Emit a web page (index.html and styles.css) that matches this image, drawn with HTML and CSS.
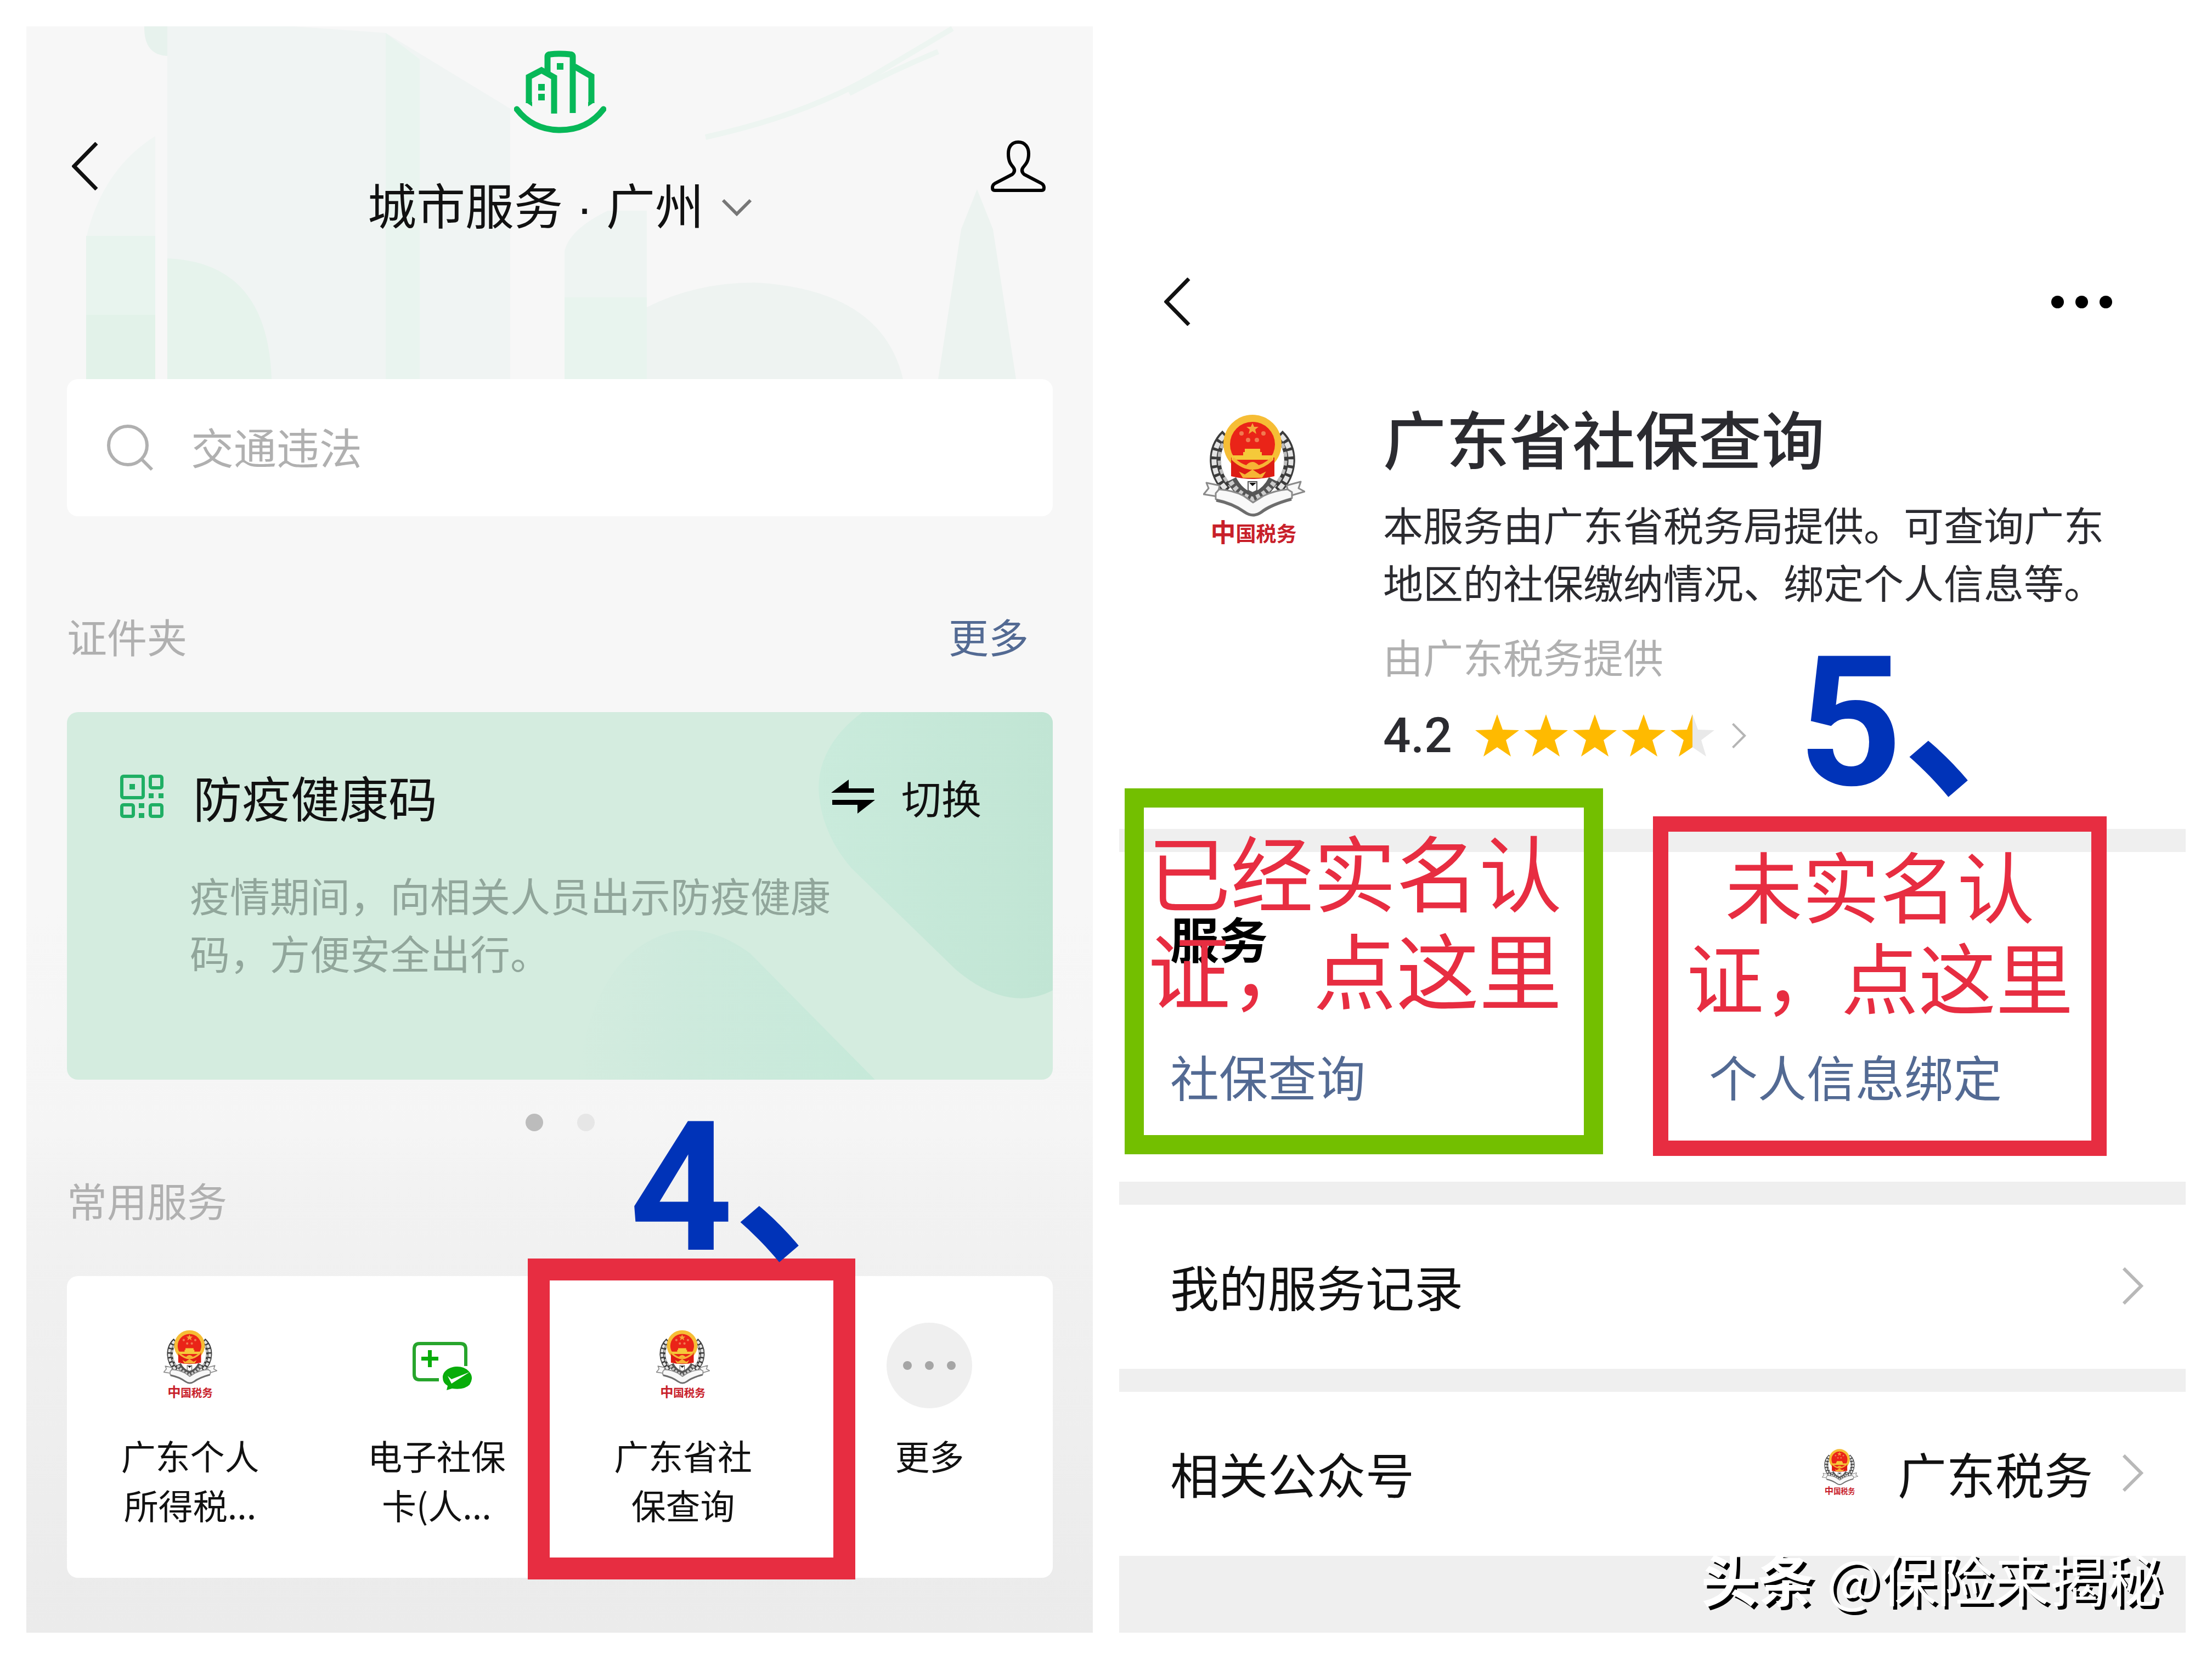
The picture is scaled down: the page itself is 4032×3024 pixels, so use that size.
FILE: index.html
```html
<!DOCTYPE html>
<html lang="zh-CN">
<head>
    <meta charset="UTF-8">
    <meta name="viewport" content="width=device-width, initial-scale=1.0">
    <title>城市服务 · 广州</title>
    <link rel="stylesheet" href="styles.css">
</head>
<body>
    <!-- Shared icons -->
    <svg class="sprite" aria-hidden="true">
        <symbol id="emblem" viewBox="0 0 186 244">
            <g fill="none">
                <path d="M42 36C14 62 16 108 46 136M138 36C166 62 164 108 134 136" stroke="#3c3c3c" stroke-width="20"/>
                <path d="M38 38C12 64 14 108 44 138M142 38C168 64 166 108 136 138" stroke="#e4e4e4" stroke-width="9" stroke-dasharray="11 5"/>
                <path d="M46 40C22 64 24 104 52 132M134 40C158 64 156 104 128 132" stroke="#bdbdbd" stroke-width="6" stroke-dasharray="9 7"/>
                <path d="M52 118C60 134 72 146 90 152C108 146 120 134 128 118" stroke="#555" stroke-width="18"/>
                <path d="M50 122C60 138 74 148 90 154C106 148 120 138 130 122" stroke="#ccc" stroke-width="9" stroke-dasharray="7 5"/>
            </g>
            <circle cx="90" cy="53" r="53" fill="#f6bd35"/>
            <path d="M51 78H130V112Q90 122 51 112Z" fill="#dd1c14"/>
            <circle cx="90" cy="54" r="41" fill="#ea2418"/>
            <path d="M90 15l3 7h8l-6 5 2 8-7-5-7 5 2-8-6-5h8z" fill="#f4a83c"/>
            <g fill="#f07a50">
                <circle cx="70" cy="34" r="4"/>
                <circle cx="110" cy="34" r="4"/>
                <circle cx="82" cy="46" r="4"/>
                <circle cx="98" cy="46" r="4"/>
            </g>
            <path d="M76 62H104V68H107V74H128V82H52V74H73V68H76Z" fill="#f5c93a"/>
            <path d="M54 80Q90 114 126 80" fill="none" stroke="#f6b435" stroke-width="6"/>
            <path d="M78 94Q90 80 102 94M68 106l8 4 14-9 14 9 8-4-5 8H73z" fill="#f6b435" stroke="#f6b435" stroke-width="2"/>
            <path d="M82 122H98V138L90 142L82 138Z" fill="#fff" stroke="#555" stroke-width="2"/>
            <path d="M84 124H97L90 130Z" fill="#111"/>
            <g fill="#f8f8f8" stroke="#8a8a8a" stroke-width="3" stroke-linejoin="round">
                <path d="M30 129L6 124L10 134L1 145L26 149Z"/>
                <path d="M152 129L178 122L174 134L185 140L158 148Z"/>
                <path d="M29 136Q56 138 74 148L91 160L110 148Q130 138 154 136L162 141V152Q120 164 106 176Q91 188 76 176Q54 160 23 154V143Z"/>
            </g>
            <path d="M24 156Q54 162 76 178Q91 188 106 178Q124 164 161 154" fill="none" stroke="#6d6d6d" stroke-width="5"/>
            <text class="emblem-text" x="92" y="231" text-anchor="middle"><tspan class="emblem-first">中</tspan>国税务</text>
        </symbol>
        <symbol id="back" viewBox="0 0 48 88">
            <path d="M45 2L4 44L45 86" fill="none" stroke="currentColor" stroke-width="7"/>
        </symbol>
        <symbol id="next" viewBox="0 0 38 68">
            <path d="M2 2L34 34L2 66" fill="none" stroke="currentColor" stroke-width="6"/>
        </symbol>
        <symbol id="star" viewBox="0 0 80 78">
            <path d="M40 0L50 28L80 29L56 47L65 77L40 60L15 77L24 47L0 29L30 28Z"/>
        </symbol>
    </svg>

    <main class="screens">
        <section class="screen city">
            <svg class="skyline" viewBox="0 0 1944 643" preserveAspectRatio="none" aria-hidden="true">
                <path d="M215 0H306Q306 54 260 54T215 0Z" fill="#e7f2ed"/>
                <path d="M257 0H486L655 12L882 150V643H257Z" fill="#f0f4f3"/>
                <path d="M655 12L717 60V643H655Z" fill="#e9f4ef"/>
                <path d="M235 200Q140 260 110 382H235Z" fill="#f0f5f3"/>
                <path d="M109 382H235V643H109Z" fill="#e8f4ee"/>
                <path d="M109 526H235V643H109Z" fill="#e2f2e9"/>
                <path d="M257 423Q440 430 447 643H257Z" fill="#e6f3ec"/>
                <path d="M981 643V410Q990 370 1060 336H1131V643Z" fill="#eef4f2"/>
                <path d="M981 494H1131V643H981Z" fill="#e8f4ee"/>
                <path d="M1131 512Q1220 467 1328 467Q1560 480 1598 643H1131Z" fill="#eef3f1"/>
                <path d="M1662 643L1704 370L1733 297L1762 370L1804 643Z" fill="#ecf3f0"/>
                <path d="M1688 4L1560 80Q1430 160 1238 202M1662 46Q1580 80 1500 122" fill="none" stroke="#edf5f1" stroke-width="10"/>
            </svg>

            <header class="city-header">
                <button class="icon-btn" type="button" aria-label="返回">
                    <svg class="back-icon"><use href="#back"/></svg>
                </button>
                <div class="city-name">
                    <svg class="city-logo" viewBox="0 0 168 152" fill="none" stroke="#07b858" aria-hidden="true">
                        <path d="M27 96V48L50 36L73 49V115" stroke-width="11"/>
                        <path d="M61 42V11Q61 7 66 7Q84 5 102 7Q107 7 107 11V114" stroke-width="11"/>
                        <path d="M110 29L141 47V96" stroke-width="11"/>
                        <path d="M21 94H33V102ZM147 94H135V102Z" fill="#07b858" stroke="none"/>
                        <path d="M5 107Q34 145 84 145T163 107" stroke-width="11" stroke-linecap="round"/>
                        <path d="M78 23H90V35H78ZM44 61H56V73H44ZM44 79H56V91H44Z" fill="#07b858" stroke="none"/>
                    </svg>
                    <button class="city-select" type="button">
                        城市服务 · 广州
                        <svg class="down-icon" viewBox="0 0 56 32"><path d="M3 3L28 28L53 3" fill="none" stroke="#777" stroke-width="6"/></svg>
                    </button>
                </div>
                <button class="icon-btn user" type="button" aria-label="我的">
                    <svg class="user-icon" viewBox="0 0 100 94"><path d="M50 3C37 3 32 13 32 24C32 38 36 43 41 49Q46 56 39 62L8 78Q3 81 3 86Q3 91 7 91H93Q97 91 97 86Q97 81 92 78L61 62Q54 56 59 49C64 43 69 38 69 24C69 13 63 3 50 3Z" fill="none" stroke="#000" stroke-width="6"/></svg>
                </button>
            </header>

            <label class="search">
                <svg class="search-icon" viewBox="0 0 86 86" aria-hidden="true"><path d="M39 4a35 35 0 1 0 0 70a35 35 0 1 0 0-70M64 64L83 83" fill="none" stroke="#b0b0b0" stroke-width="6"/></svg>
                <input class="search-input" type="text" placeholder="交通违法" aria-label="搜索">
            </label>

            <div class="section-head">
                <h2>证件夹</h2>
                <a href="#">更多</a>
            </div>
            <article class="pass-card">
                <svg class="pass-art" viewBox="0 0 1797 671" preserveAspectRatio="none" aria-hidden="true">
                    <defs>
                        <linearGradient id="hill" x1="0" x2="1">
                            <stop offset="0" stop-color="#d4ecdf"/>
                            <stop offset="0.3" stop-color="#ceeadd"/>
                            <stop offset="1" stop-color="#c6e9d9"/>
                        </linearGradient>
                        <linearGradient id="leaf" x1="0" x2="1">
                            <stop offset="0" stop-color="#caebdc"/>
                            <stop offset="1" stop-color="#c1e5d4"/>
                        </linearGradient>
                    </defs>
                    <path d="M1450 0Q1370 60 1370 140Q1374 220 1430 285L1620 470Q1715 550 1797 508V0Z" fill="url(#leaf)"/>
                    <path d="M930 671Q960 440 1100 402Q1170 385 1245 440L1473 671Z" fill="url(#hill)"/>
                </svg>
                <div class="pass-head">
                    <svg class="qr-icon" viewBox="0 0 82 82" aria-hidden="true">
                        <g fill="none" stroke="#1faf64" stroke-width="6">
                            <rect x="4" y="4" width="39" height="39" rx="3"/>
                            <rect x="56" y="4" width="21" height="21" rx="3"/>
                            <rect x="4" y="56" width="21" height="21" rx="3"/>
                            <rect x="56" y="56" width="21" height="21" rx="3"/>
                        </g>
                        <path d="M18 18h10v10h-10zM53 35h9v9h-9zM71 35h9v9h-9zM35 53h10v9h-10zM35 71h10v9h-10z" fill="#1faf64"/>
                    </svg>
                    <h3>防疫健康码</h3>
                    <button class="switch-btn" type="button">
                        <svg class="switch-icon" viewBox="0 0 80 62" aria-hidden="true"><path d="M0 24L32 0V16H78V24ZM2 37H80L48 62V46H2Z"/></svg>
                        切换
                    </button>
                </div>
                <p class="pass-desc">疫情期间，向相关人员出示防疫健康码，方便安全出行。</p>
            </article>
            <div class="pager"><span class="dot active"></span><span class="dot"></span></div>

            <div class="section-head common">
                <h2>常用服务</h2>
            </div>
            <div class="services">
                <button class="service" type="button">
                    <span class="service-icon"><svg class="emblem-small"><use href="#emblem"/></svg></span>
                    广东个人<br>所得税...
                </button>
                <button class="service" type="button">
                    <span class="service-icon">
                        <svg class="card-icon" viewBox="0 0 128 90" aria-hidden="true">
                            <path d="M68 71H33Q23 71 23 61V15Q23 5 33 5H107Q117 5 117 15V46" fill="none" stroke="#27a52c" stroke-width="6"/>
                            <path d="M48 17h7v12h12v7h-12v12h-7v-12h-12v-7h12z" fill="#08ac0a"/>
                            <path d="M102 47C87 47 75 55 75 67Q75 77 84 82L82 90L92 87Q114 90 124 80Q133 66 122 55Q114 47 102 47Z" fill="#08ac0a"/>
                            <path d="M84 64L91 70L124 57L91 78Z" fill="#fff"/>
                        </svg>
                    </span>
                    电子社保<br>卡(人...
                </button>
                <button class="service" type="button">
                    <span class="service-icon"><svg class="emblem-small"><use href="#emblem"/></svg></span>
                    广东省社<br>保查询
                </button>
                <button class="service" type="button">
                    <span class="service-icon more"><i></i><i></i><i></i></span>
                    更多
                </button>
                <div class="mark mark-service"></div>
                <span class="step step-four">4、</span>
            </div>
        </section>

        <section class="screen detail">
            <header class="detail-header">
                <button class="icon-btn" type="button" aria-label="返回">
                    <svg class="back-icon"><use href="#back"/></svg>
                </button>
                <button class="icon-btn menu" type="button" aria-label="菜单"><i></i><i></i><i></i></button>
            </header>
            <div class="info">
                <svg class="emblem-large"><use href="#emblem"/></svg>
                <div class="info-body">
                    <h1>广东省社保查询</h1>
                    <p class="info-desc">本服务由广东省税务局提供。可查询广东地区的社保缴纳情况、绑定个人信息等。</p>
                    <p class="provider">由广东税务提供</p>
                    <div class="rating">
                        <span class="score">4.2</span>
                        <span class="stars">
                            <svg><use href="#star"/></svg>
                            <svg><use href="#star"/></svg>
                            <svg><use href="#star"/></svg>
                            <svg><use href="#star"/></svg>
                            <svg viewBox="0 0 80 78"><path d="M40 0L50 28L80 29L56 47L65 77L40 60L15 77L24 47L0 29L30 28Z" fill="#e9e9e9"/><path d="M40 0V60L15 77L24 47L0 29L30 28Z"/></svg>
                        </span>
                        <svg class="rating-next"><use href="#next"/></svg>
                    </div>
                </div>
            </div>

            <div class="block entries">
                <h2>服务</h2>
                <div class="entry-links">
                    <a href="#">社保查询</a>
                    <a href="#">个人信息绑定</a>
                </div>
                <div class="mark mark-verified">已经实名认<br>证，点这里</div>
                <div class="mark mark-unverified">未实名认<br>证，点这里</div>
                <span class="step step-five">5、</span>
            </div>
            <a class="block row" href="#">
                <span>我的服务记录</span>
                <svg class="next-icon"><use href="#next"/></svg>
            </a>
            <a class="block row" href="#">
                <span>相关公众号</span>
                <svg class="emblem-mini"><use href="#emblem"/></svg>
                <span class="account">广东税务</span>
                <svg class="next-icon"><use href="#next"/></svg>
            </a>
            <footer class="watermark"><span><b>头条</b> @保险来揭秘</span></footer>
        </section>
    </main>
</body>
</html>
```

FILE: styles.css
```css
:root {
    --text: #111;
    --muted: #b0b0b0;
    --link: #536a93;
    --red: #e72d41;
    --green: #73bf00;
    --blue: #0033b8;
    --band: #efefef;
}

* {
    box-sizing: border-box;
}

body {
    margin: 0;
    background: #fff;
    color: var(--text);
    font-family: "Noto Sans CJK SC", "Noto Sans", sans-serif;
    font-size: 89px;
    line-height: 104px;
}

h1, h2, h3, p {
    margin: 0;
    font-weight: 400;
}

a {
    color: inherit;
    text-decoration: none;
}

button {
    margin: 0;
    padding: 0;
    border: 0;
    background: none;
    color: inherit;
    font: inherit;
}

svg {
    display: block;
    flex: none;
}

.sprite {
    display: none;
}

.emblem-text {
    font-size: 37px;
    font-weight: 700;
    fill: #c8202a;
}

.emblem-first {
    font-size: 46px;
}

.screens {
    display: grid;
    grid-template-columns: 1fr 1fr;
    gap: 48px;
    min-height: 100vh;
    padding: 48px;
}

.screen {
    position: relative;
    display: flex;
    flex-direction: column;
}

.icon-btn {
    display: flex;
    align-items: center;
    height: 96px;
}

.back-icon {
    width: 48px;
    height: 88px;
}

/* City services */
.city {
    padding: 44px 73px 98px 74px;
    background: linear-gradient(#f7f7f7 0, #f7f7f7 55%, #f5f5f5 69%, #f2f2f2 72%, #ebebeb 100%);
}

.skyline {
    position: absolute;
    top: 0;
    left: 0;
    width: 100%;
    height: 643px;
}

.city-header {
    position: relative;
    display: grid;
    grid-template-columns: 1fr auto 1fr;
    align-items: start;
    padding: 0 9px;
}

.city-header .icon-btn {
    margin-top: 163px;
}

.user {
    justify-self: end;
    padding-right: 4px;
}

.city-name {
    display: flex;
    flex-direction: column;
    align-items: center;
    gap: 82px;
}

.city-logo {
    width: 168px;
    height: 152px;
}

.city-select {
    display: flex;
    align-items: center;
    gap: 32px;
    font-family: "Liberation Sans", "Noto Sans CJK SC", sans-serif;
}

.down-icon {
    width: 56px;
    height: 32px;
}

.user-icon {
    width: 100px;
    height: 94px;
}

.search {
    position: relative;
    display: flex;
    align-items: center;
    gap: 68px;
    height: 250px;
    margin-top: 261px;
    padding: 0 72px;
    border-radius: 20px;
    background: #fff;
}

.search-icon {
    width: 86px;
    height: 86px;
}

.search-input {
    flex: 1;
    min-width: 0;
    padding: 0 0 6px;
    border: 0;
    background: none;
    color: var(--text);
    font: inherit;
    font-size: 78px;
}

.search-input::placeholder {
    color: var(--muted);
}

.section-head {
    display: flex;
    justify-content: space-between;
    margin: 165px 0 88px;
    padding-right: 44px;
    font-size: 73px;
}

.section-head h2 {
    color: var(--muted);
    font-size: 73px;
}

.section-head a {
    color: var(--link);
}

.section-head.common {
    margin-top: 72px;
}

.pass-card {
    position: relative;
    padding: 102px 130px 180px 96px;
    border-radius: 20px;
    background: #d4ecdf;
    overflow: hidden;
}

.pass-art {
    position: absolute;
    top: 0;
    left: 0;
    width: 100%;
    height: 100%;
}

.pass-head {
    position: relative;
    display: flex;
    align-items: center;
    gap: 52px;
}

.pass-head h3 {
    flex: 1;
    font-size: 89px;
}

.qr-icon {
    width: 82px;
    height: 82px;
}

.switch-btn {
    display: flex;
    align-items: center;
    gap: 48px;
    font-size: 73px;
}

.switch-icon {
    width: 80px;
    height: 62px;
}

.pass-desc {
    position: relative;
    max-width: 1310px;
    margin-top: 74px;
    padding-left: 128px;
    color: #91a69b;
    font-size: 73px;
    line-height: 105px;
}

.pager {
    display: flex;
    justify-content: center;
    gap: 62px;
    margin-top: 62px;
}

.dot {
    width: 32px;
    height: 32px;
    border-radius: 50%;
    background: #e6e6e6;
}

.dot.active {
    background: #bcbcbc;
}

.services {
    position: relative;
    display: grid;
    grid-template-columns: repeat(4, 1fr);
    padding: 85px 0 89px;
    border-radius: 20px;
    background: #fff;
}

.service {
    display: flow-root;
    align-self: start;
    font-size: 63px;
    line-height: 90px;
}

.service-icon {
    display: flex;
    align-items: center;
    justify-content: center;
    width: 156px;
    height: 156px;
    margin: 0 auto 40px;
}

.emblem-small {
    width: 98px;
    height: 130px;
}

.card-icon {
    width: 128px;
    height: 90px;
}

.more {
    gap: 24px;
    border-radius: 50%;
    background: #efefef;
}

.more i {
    width: 16px;
    height: 16px;
    border-radius: 50%;
    background: #a5a5a5;
}

/* Hand-drawn guide marks over the screens */
.mark {
    position: absolute;
    border: 28px solid var(--red);
    color: var(--red);
    pointer-events: none;
}

.mark-service {
    top: -32px;
    left: 840px;
    width: 597px;
    height: 585px;
    border-width: 40px;
}

.mark-verified {
    top: -116px;
    left: 10px;
    width: 872px;
    height: 667px;
    padding: 24px 7px;
    border: 35px solid var(--green);
    font-size: 151px;
    line-height: 178px;
}

.mark-unverified {
    top: -65px;
    left: 973px;
    width: 827px;
    height: 619px;
    padding-top: 12px;
    font-size: 141px;
    line-height: 166px;
    text-align: center;
}

.step {
    position: absolute;
    color: var(--blue);
    font-family: Roboto, "Noto Sans CJK SC", sans-serif;
    font-size: 330px;
    font-weight: 700;
    line-height: 330px;
    white-space: nowrap;
}

.step-four {
    top: -325px;
    left: 1025px;
}

.step-five {
    top: -400px;
    left: 1238px;
}

/* Service detail */
.detail-header {
    display: flex;
    justify-content: space-between;
    padding: 454px 134px 0 82px;
}

.menu {
    gap: 21px;
}

.menu i {
    width: 23px;
    height: 23px;
    border-radius: 50%;
    background: #000;
}

.info {
    display: flex;
    align-items: flex-start;
    gap: 142px;
    padding: 130px 100px 122px 153px;
}

.emblem-large {
    width: 186px;
    height: 244px;
    margin-top: 28px;
}

.info-body {
    flex: 1;
    color: #2b2b30;
}

.info-body h1 {
    font-size: 115px;
    font-weight: 500;
    line-height: 136px;
}

.info-desc {
    max-width: 1330px;
    margin-top: 38px;
    font-size: 73px;
    line-height: 105px;
}

.provider {
    margin-top: 31px;
    color: var(--muted);
    font-size: 73px;
}

.rating {
    display: flex;
    align-items: center;
    margin-top: 46px;
    height: 96px;
}

.score {
    font-family: Roboto, sans-serif;
    font-weight: 500;
}

.stars {
    display: flex;
    gap: 9px;
    margin: 0 32px 0 42px;
    fill: #ffba00;
}

.stars svg {
    width: 80px;
    height: 78px;
}

.rating-next {
    width: 26px;
    height: 46px;
    color: #b5b5b5;
}

.block {
    position: relative;
    border-top: 42px solid var(--band);
}

.entries {
    padding: 104px 93px 141px;
}

.entries h2 {
    color: #000;
    font-size: 89px;
    font-weight: 700;
}

.entry-links {
    display: grid;
    grid-template-columns: 1fr 1fr;
    gap: 206px;
    margin-top: 148px;
    color: var(--link);
    white-space: nowrap;
}

.row {
    display: flex;
    align-items: center;
    height: 341px;
    padding: 0 77px 4px 93px;
}

.row span:first-child {
    flex: 1;
}

.emblem-mini {
    width: 66px;
    height: 87px;
}

.account {
    margin: 0 54px 0 72px;
}

.next-icon {
    width: 38px;
    height: 68px;
    color: #b8b8b8;
}

.watermark {
    display: flex;
    flex: 1;
    justify-content: flex-end;
    padding-right: 42px;
    background: var(--band);
    color: #fff;
    font-size: 103px;
    line-height: 80px;
    text-shadow: 6px 6px 0 #000;
}
```
